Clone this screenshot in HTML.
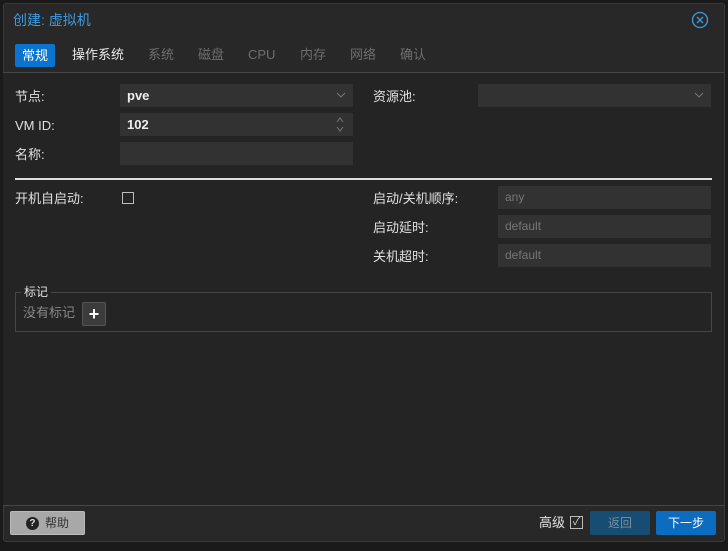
<!DOCTYPE html>
<html><head><meta charset="utf-8"><style>
*{margin:0;padding:0;box-sizing:border-box}
body{width:728px;height:551px;background:#1a1a1a;font-family:"Liberation Sans","Noto Sans CJK SC",sans-serif;font-size:13px;color:#e0e0e0;position:relative;overflow:hidden}
.a{position:absolute;line-height:16px}
.win{left:3px;top:3px;width:722px;height:539px;background:#282828;border:1px solid #3a3a3a;border-radius:3px}
.body{left:3px;top:72px;width:721px;height:434px;background:#242424;border-top:1px solid #464646;border-bottom:1px solid #464646}
.lbl{color:#e0e0e0;font-size:13px}
.inp{background:#323232;height:23px;line-height:23px;padding:0 7px}
.ph{color:#777;font-size:12px}
.tab{font-size:13px;color:#6e6e6e}
.btn{border-radius:2px;font-size:12px;text-align:center;line-height:24px}
</style></head><body>
<div class="a win"></div>
<div class="a" style="left:13px;top:11px;color:#3d9be0;font-size:14px;line-height:18px">创建: 虚拟机</div>
<svg class="a" style="left:691px;top:11px" width="18" height="18" viewBox="0 0 18 18"><circle cx="9" cy="9" r="7.5" fill="none" stroke="#3d9be0" stroke-width="1.3"/><path d="M6 6L12 12M12 6L6 12" stroke="#3d9be0" stroke-width="1.3"/></svg>
<div class="a" style="left:15px;top:44px;width:40px;height:23px;background:#0b74d1;border-radius:2px;color:#fff;text-align:center;line-height:23px">常规</div>
<div class="a tab" style="left:72px;top:47px;color:#e8e8e8">操作系统</div>
<div class="a tab" style="left:148px;top:47px">系统</div>
<div class="a tab" style="left:198px;top:47px">磁盘</div>
<div class="a tab" style="left:248px;top:47px">CPU</div>
<div class="a tab" style="left:300px;top:47px">内存</div>
<div class="a tab" style="left:350px;top:47px">网络</div>
<div class="a tab" style="left:400px;top:47px">确认</div>
<div class="a body"></div>
<div class="a lbl" style="left:15px;top:89px">节点:</div>
<div class="a inp" style="left:120px;top:84px;width:233px;font-weight:bold;color:#eee">pve</div>
<svg class="a" style="left:336px;top:92px" width="10" height="7"><path d="M1 1L5 5L9 1" fill="none" stroke="#777"/></svg>
<div class="a lbl" style="left:373px;top:89px">资源池:</div>
<div class="a inp" style="left:478px;top:84px;width:233px"></div>
<svg class="a" style="left:694px;top:92px" width="10" height="7"><path d="M1 1L5 5L9 1" fill="none" stroke="#777"/></svg>
<div class="a lbl" style="left:15px;top:118px">VM ID:</div>
<div class="a inp" style="left:120px;top:113px;width:233px;font-weight:bold;color:#eee">102</div>
<svg class="a" style="left:335px;top:116px" width="10" height="17"><path d="M2 6L5 2L8 6M2 11L5 15L8 11" fill="none" stroke="#777"/></svg>
<div class="a lbl" style="left:15px;top:147px">名称:</div>
<div class="a inp" style="left:120px;top:142px;width:233px"></div>
<div class="a" style="left:15px;top:178px;width:697px;height:2px;background:#ddd"></div>
<div class="a lbl" style="left:15px;top:191px">开机自启动:</div>
<div class="a" style="left:122px;top:192px;width:12px;height:12px;border:1px solid #bbb"></div>
<div class="a lbl" style="left:373px;top:191px">启动/关机顺序:</div>
<div class="a inp ph" style="left:498px;top:186px;width:213px">any</div>
<div class="a lbl" style="left:373px;top:220px">启动延时:</div>
<div class="a inp ph" style="left:498px;top:215px;width:213px">default</div>
<div class="a lbl" style="left:373px;top:249px">关机超时:</div>
<div class="a inp ph" style="left:498px;top:244px;width:213px">default</div>
<div class="a" style="left:15px;top:292px;width:697px;height:40px;border:1px solid #464646"></div>
<div class="a" style="left:21px;top:284px;background:#242424;padding:0 3px;font-size:12px">标记</div>
<div class="a" style="left:23px;top:305px;color:#888;font-size:13px">没有标记</div>
<div class="a" style="left:82px;top:302px;width:24px;height:24px;background:#3c3c3c;border:1px solid #555;border-radius:2px;color:#fff;font-weight:bold;text-align:center;line-height:22px;font-size:18px">+</div>
<div class="a btn" style="left:10px;top:511px;width:75px;height:24px;background:#a8a8a8;border:1px solid #bbb;color:#333;display:flex;align-items:center;justify-content:center;gap:6px"><span style="display:inline-block;width:13px;height:13px;border-radius:50%;background:#222;color:#ddd;font-size:10px;line-height:13px;font-weight:bold;text-align:center">?</span><span>帮助</span></div>
<div class="a lbl" style="left:539px;top:515px">高级</div>
<div class="a" style="left:570px;top:516px;width:13px;height:13px;border:1px solid #bbb;color:#ccc;font-size:11px;line-height:11px;text-align:center">✓</div>
<div class="a btn" style="left:590px;top:511px;width:60px;height:24px;background:#174c73;color:#7a8fa0;line-height:24px">返回</div>
<div class="a btn" style="left:656px;top:511px;width:60px;height:24px;background:#0b6cc0;color:#fff;line-height:24px">下一步</div>
</body></html>
